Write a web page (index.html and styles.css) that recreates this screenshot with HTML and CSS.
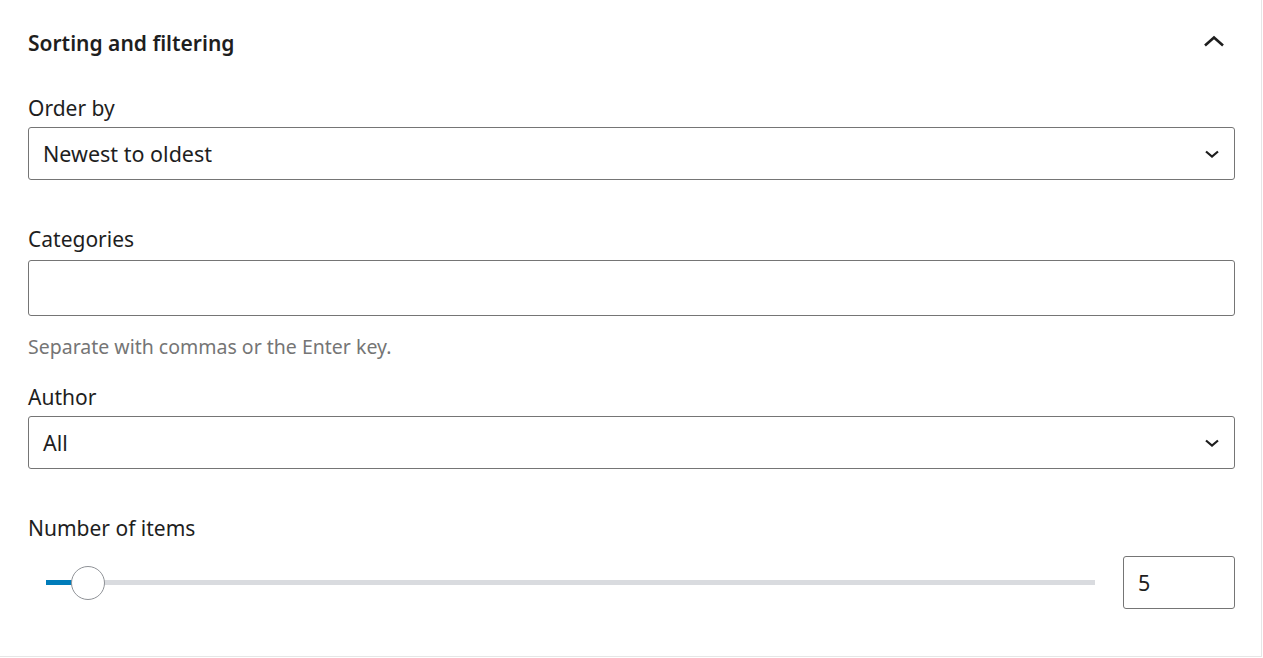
FILE: index.html
```html
<!DOCTYPE html>
<html lang="en">
<head>
<meta charset="utf-8">
<title>Sorting and filtering</title>
<link rel="stylesheet" href="styles.css">
</head>
<body>
<div class="panel">
  <div class="panel-header">
    <h2 class="panel-title">Sorting and filtering</h2>
    <svg class="toggle" width="24" height="14" viewBox="0 0 24 14" aria-hidden="true">
      <polyline points="3,11.5 12,3.5 21,11.5" fill="none" stroke="#1e1e1e" stroke-width="2.6"/>
    </svg>
  </div>
  <div class="panel-body">
    <div class="field">
      <label class="label">Order by</label>
      <div class="control select">
        <span class="value">Newest to oldest</span>
        <svg class="caret" width="16" height="10" viewBox="0 0 16 10" aria-hidden="true">
          <polyline points="2,2.5 8,7.5 14,2.5" fill="none" stroke="#1e1e1e" stroke-width="2.2"/>
        </svg>
      </div>
    </div>
    <div class="field gap-lg">
      <label class="label">Categories</label>
      <div class="control text-input"></div>
      <p class="help">Separate with commas or the Enter key.</p>
    </div>
    <div class="field gap-md">
      <label class="label">Author</label>
      <div class="control select">
        <span class="value">All</span>
        <svg class="caret" width="16" height="10" viewBox="0 0 16 10" aria-hidden="true">
          <polyline points="2,2.5 8,7.5 14,2.5" fill="none" stroke="#1e1e1e" stroke-width="2.2"/>
        </svg>
      </div>
    </div>
    <div class="field gap-lg">
      <label class="label">Number of items</label>
      <div class="range-row">
        <div class="range">
          <div class="track">
            <div class="fill" style="width:4.04%"></div>
            <div class="thumb" style="left:4.04%"></div>
          </div>
        </div>
        <div class="control number"><span class="value">5</span></div>
      </div>
    </div>
  </div>
</div>
</body>
</html>
```

FILE: styles.css
```css
* { box-sizing: border-box; }
html, body { margin: 0; padding: 0; background: #fff; }
body {
  font-family: "Noto Sans", "Open Sans", sans-serif;
  color: #1e1e1e;
  width: 1263px;
  height: 658px;
  overflow: hidden;
}
.panel {
  width: 1262px;
  height: 657px;
  border-right: 1px solid #e6e6e6;
  border-bottom: 1px solid #e6e6e6;
}
.panel-header {
  height: 86px;
  display: flex;
  align-items: center;
  justify-content: space-between;
  padding: 0 35px 0 28px;
}
.panel-title {
  margin: 0;
  font-size: 21px;
  font-weight: 600;
  line-height: 24px;
}
.toggle { display: block; margin-top: -4px; }
.panel-body { padding: 10px 26px 0 28px; }
.field { display: flex; flex-direction: column; }
.gap-lg { margin-top: 47px; }
.gap-md { margin-top: 26px; }
.label {
  font-size: 21px;
  line-height: 24px;
  margin-bottom: 7px;
}
.control {
  border: 1px solid #757575;
  border-radius: 3px;
  background: #fff;
  display: flex;
  align-items: center;
  padding: 0 14px;
}
.select { height: 53px; justify-content: space-between; padding-right: 14px; }
.value { font-size: 21.5px; line-height: 24px; }
.caret { display: block; }
.text-input { height: 56px; }
.field .text-input { margin-top: 2px; }
.help {
  margin: 19px 0 0;
  font-size: 19.5px;
  line-height: 24px;
  color: #757575;
}
.range-row {
  display: flex;
  align-items: center;
  gap: 10px;
  margin-top: 9px;
}
.range {
  flex: 1;
  padding: 0 18px;
  height: 53px;
  display: flex;
  align-items: center;
}
.track {
  position: relative;
  width: 100%;
  height: 5px;
  background: #d9dbdf;
}
.fill {
  height: 100%;
  background: #007cba;
}
.thumb {
  position: absolute;
  top: 50%;
  width: 34px;
  height: 34px;
  margin: -17px 0 0 -17px;
  border: 1px solid #8f9297;
  border-radius: 50%;
  background: #fff;
}
.number { width: 112px; height: 53px; flex: none; }
```
